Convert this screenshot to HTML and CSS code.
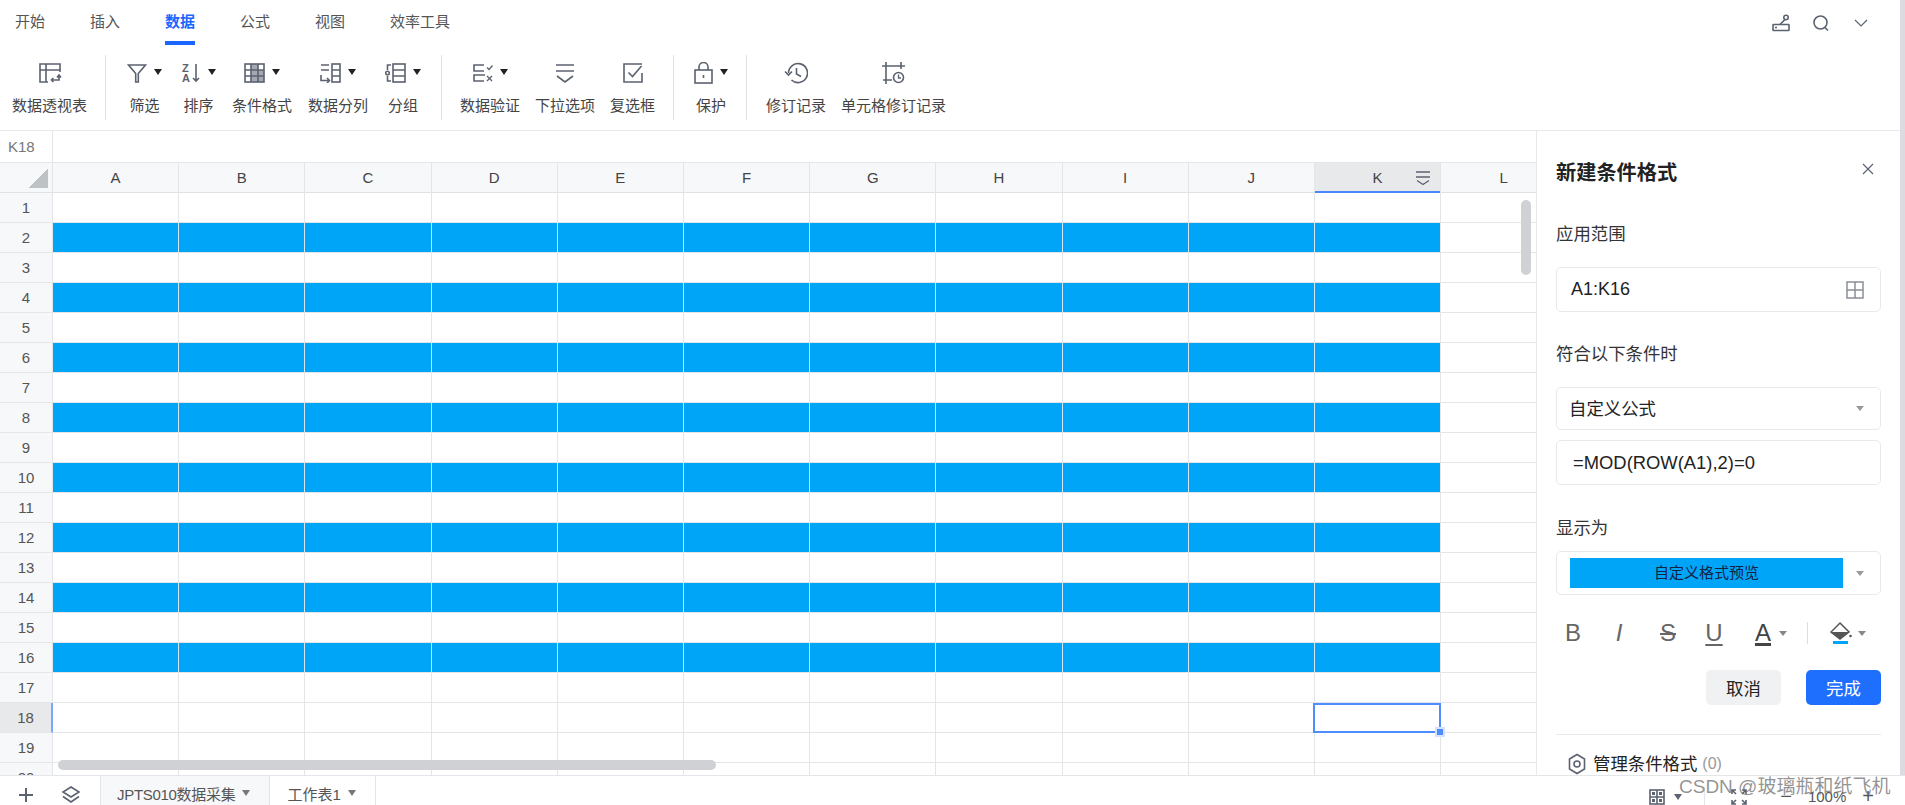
FILE: index.html
```html
<!DOCTYPE html>
<html lang="zh-CN">

<head>
    <meta charset="UTF-8">
    <meta name="viewport" content="width=device-width, initial-scale=1.0">
    <title>新建条件格式</title>
    <link rel="stylesheet" href="styles.css">
</head>

<body>
    <div class="top-wrap">
        <div class="top">
            <div class="tabs">
                <span class="tab">开始</span>
                <span class="tab">插入</span>
                <span class="tab active">数据</span>
                <span class="tab">公式</span>
                <span class="tab">视图</span>
                <span class="tab">效率工具</span>
                <div class="tabs-right">
                    <svg class="ico" width="20" height="20" viewBox="0 0 20 20"><rect x="2" y="11.5" width="16" height="6" rx="0.5"/><path d="M4 14.5h2M9 11.5l5-5"/><circle cx="15" cy="4.5" r="2.2"/></svg>
                    <svg class="ico" width="20" height="20" viewBox="0 0 20 20"><circle cx="9.5" cy="9.5" r="6.5"/><path d="M14 14.5l3 3"/></svg>
                    <svg class="ico thin" width="20" height="20" viewBox="0 0 20 20"><path d="M4 7l6 6 6-6"/></svg>
                </div>
            </div>

            <div class="ribbon">
                <div class="group g1">
                    <div class="item">
                        <div class="item-icon"><svg class="ico" width="24" height="22" viewBox="0 0 24 22"><path d="M10 20H2V2h20v8M2 8h20M8 2v18"/><path d="M13 18h8v-5M19 15.500l2-2.500 2 2.500M13 18l2.500-2M13 18l2.500 2"/></svg></div>
                        <span>数据透视表</span>
                    </div>
                </div>
                <div class="group g2">
                    <div class="item wide-gap">
                        <div class="item-icon"><svg class="ico" width="20" height="20" viewBox="0 0 20 20"><path d="M1.500 2h17L11.300 10.500V19H8.700v-8.500z"/></svg><i class="caret"></i></div>
                        <span>筛选</span>
                    </div>
                    <div class="item">
                        <div class="item-icon"><svg class="ico" width="20" height="20" viewBox="0 0 20 20"><text class="ico-text" x="1" y="9">Z</text><text class="ico-text" x="1" y="19">A</text><path d="M15 1v17M12 15l3 3 3-3"/></svg><i class="caret"></i></div>
                        <span>排序</span>
                    </div>
                    <div class="item">
                        <div class="item-icon"><svg class="ico" width="21" height="20" viewBox="0 0 21 20"><rect class="shade" x="7" y="7" width="13" height="12"/><rect class="shade" x="7" y="1" width="7" height="6"/><rect x="1" y="1" width="19" height="18"/><path d="M1 7h19M1 13h19M7 1v18M14 1v18"/></svg><i class="caret"></i></div>
                        <span>条件格式</span>
                    </div>
                    <div class="item">
                        <div class="item-icon"><svg class="ico" width="21" height="20" viewBox="0 0 21 20"><path d="M1 2h8M1 7h8M1 12v5.500h8M7 15l2.500 2.500L7 20"/><rect x="12" y="1" width="8" height="18"/><path d="M12 7h8M12 13h8"/></svg><i class="caret"></i></div>
                        <span>数据分列</span>
                    </div>
                    <div class="item">
                        <div class="item-icon"><svg class="ico" width="21" height="20" viewBox="0 0 21 20"><rect x="8" y="1" width="12" height="18"/><path d="M8 7h12M8 13h12M6 2H2.500v5M2.500 13v5H6"/><circle cx="2.500" cy="10" r="1.800"/></svg><i class="caret"></i></div>
                        <span>分组</span>
                    </div>
                </div>
                <div class="group g3">
                    <div class="item">
                        <div class="item-icon"><svg class="ico" width="20" height="20" viewBox="0 0 20 20"><path d="M11 2H1v6h10M12 12H1v6h10"/><path class="fine" d="M14 4.500l2 2 3.500-4M14 13l5 5M19 13l-5 5"/></svg><i class="caret"></i></div>
                        <span>数据验证</span>
                    </div>
                    <div class="item">
                        <div class="item-icon"><svg class="ico" width="20" height="20" viewBox="0 0 20 20"><path d="M1 2h18M1 8h18M2 13l8 6 8-6"/></svg></div>
                        <span>下拉选项</span>
                    </div>
                    <div class="item">
                        <div class="item-icon"><svg class="ico" width="20" height="20" viewBox="0 0 20 20"><path d="M19 10v9H1V1h18"/><path d="M5.500 9.500l4 4 9-10.500"/></svg></div>
                        <span>复选框</span>
                    </div>
                </div>
                <div class="group g4">
                    <div class="item">
                        <div class="item-icon"><svg class="ico" width="19" height="22" viewBox="0 0 19 22"><rect x="1" y="8" width="17" height="13"/><path d="M5 8V5a4.500 4.500 0 0 1 9 0v3M9.500 13v3"/></svg><i class="caret"></i></div>
                        <span>保护</span>
                    </div>
                </div>
                <div class="group g5">
                    <div class="item">
                        <div class="item-icon"><svg class="ico" width="24" height="22" viewBox="0 0 24 22"><path d="M4.500 11a9.500 9.500 0 1 1 3 7"/><path d="M12.500 6v6l4.500 2.500M1 9.500l3.500 3.500 3.500-3.500"/></svg></div>
                        <span>修订记录</span>
                    </div>
                    <div class="item">
                        <div class="item-icon"><svg class="ico" width="23" height="22" viewBox="0 0 23 22"><path d="M4 0v22M19 0v7M0 4h23M1 18h9"/><circle cx="16.500" cy="15.500" r="5"/><path class="fine" d="M16.500 12.500v3.500h2.500"/></svg></div>
                        <span>单元格修订记录</span>
                    </div>
                </div>
            </div>

            <div class="work">
                <div class="sheet">
                    <div class="formula-bar">
                        <div class="name-box">K18</div>
                    </div>
                    <div class="col-head">
                        <div class="corner"><i class="corner-mark"></i></div>
                        <div class="col">A</div>
                        <div class="col">B</div>
                        <div class="col">C</div>
                        <div class="col">D</div>
                        <div class="col">E</div>
                        <div class="col">F</div>
                        <div class="col">G</div>
                        <div class="col">H</div>
                        <div class="col">I</div>
                        <div class="col">J</div>
                        <div class="col col-on">K
                            <svg class="ico col-menu" width="16" height="16" viewBox="0 0 16 16"><path d="M1 2h14M1 7h14M2 10.500l6 4 6-4"/></svg>
                        </div>
                        <div class="col">L</div>
                    </div>
                    <div class="rows">
                        <div class="row"><div class="num">1</div><div class="cells"></div></div>
                        <div class="row"><div class="num">2</div><div class="cells"><div class="fill"></div></div></div>
                        <div class="row"><div class="num">3</div><div class="cells"></div></div>
                        <div class="row"><div class="num">4</div><div class="cells"><div class="fill"></div></div></div>
                        <div class="row"><div class="num">5</div><div class="cells"></div></div>
                        <div class="row"><div class="num">6</div><div class="cells"><div class="fill"></div></div></div>
                        <div class="row"><div class="num">7</div><div class="cells"></div></div>
                        <div class="row"><div class="num">8</div><div class="cells"><div class="fill"></div></div></div>
                        <div class="row"><div class="num">9</div><div class="cells"></div></div>
                        <div class="row"><div class="num">10</div><div class="cells"><div class="fill"></div></div></div>
                        <div class="row"><div class="num">11</div><div class="cells"></div></div>
                        <div class="row"><div class="num">12</div><div class="cells"><div class="fill"></div></div></div>
                        <div class="row"><div class="num">13</div><div class="cells"></div></div>
                        <div class="row"><div class="num">14</div><div class="cells"><div class="fill"></div></div></div>
                        <div class="row"><div class="num">15</div><div class="cells"></div></div>
                        <div class="row"><div class="num">16</div><div class="cells"><div class="fill"></div></div></div>
                        <div class="row"><div class="num">17</div><div class="cells"></div></div>
                        <div class="row"><div class="num num-on">18</div><div class="cells"><div class="selected"><i class="handle"></i></div></div></div>
                        <div class="row"><div class="num">19</div><div class="cells"></div></div>
                        <div class="row"><div class="num">20</div><div class="cells"></div></div>
                    </div>
                    <div class="scroll-v"></div>
                    <div class="scroll-h"></div>
                </div>

                <div class="panel">
                    <div class="panel-title">
                        <span>新建条件格式</span>
                        <svg class="ico thin" width="12" height="12" viewBox="0 0 12 12"><path d="M1 1l10 10M11 1L1 11"/></svg>
                    </div>
                    <div class="label label-range">应用范围</div>
                    <div class="field field-range">
                        <span>A1:K16</span>
                        <svg class="ico grey" width="18" height="18" viewBox="0 0 18 18"><rect x="1" y="1" width="16" height="16"/><path d="M9 1v16M1 9h16"/></svg>
                    </div>
                    <div class="label label-cond">符合以下条件时</div>
                    <div class="field field-select">
                        <span>自定义公式</span>
                        <i class="caret grey-caret"></i>
                    </div>
                    <div class="field field-formula">=MOD(ROW(A1),2)=0</div>
                    <div class="label label-show">显示为</div>
                    <div class="field field-preview">
                        <div class="preview">自定义格式预览</div>
                        <i class="caret grey-caret"></i>
                    </div>
                    <div class="format-row">
                        <span class="fmt fmt-b">B</span>
                        <span class="fmt fmt-i">I</span>
                        <span class="fmt fmt-s">S</span>
                        <span class="fmt fmt-u">U</span>
                        <span class="fmt fmt-a">A</span>
                        <i class="caret small-caret fmt-a-caret"></i>
                        <i class="fmt-sep"></i>
                        <span class="bucket">
                            <svg width="22" height="24" viewBox="0 0 22 24"><path d="M10 2l9 9-9 7-9-7z" fill="#fff" stroke="#555" stroke-width="1.500"/><path d="M1 11h18l-9 7z" fill="#555"/><circle cx="20.500" cy="15" r="1.300" fill="#555"/><rect x="3" y="20" width="15" height="3" fill="#00a5f8"/></svg>
                            <i class="caret small-caret"></i>
                        </span>
                    </div>
                    <div class="actions">
                        <button class="btn">取消</button>
                        <button class="btn primary">完成</button>
                    </div>
                    <div class="panel-line"></div>
                    <div class="manage">
                        <svg class="ico" width="18" height="22" viewBox="0 0 18 22"><path d="M9 1.500l7.500 4.500v10L9 20.500 1.500 16V6z"/><circle cx="9" cy="11" r="3"/></svg>
                        <span>管理条件格式</span>
                        <span class="count">(0)</span>
                    </div>
                </div>
            </div>
        </div>
    </div>

    <div class="bottom">
        <svg class="ico add" width="18" height="18" viewBox="0 0 18 18"><path d="M9 2v14M2 9h14"/></svg>
        <svg class="ico layers" width="20" height="20" viewBox="0 0 20 20"><path d="M10 2l8 5-8 5-8-5zM2 11.500l8 5.500 8-5.500"/></svg>
        <div class="sheet-tab on">JPTS010数据采集<i class="caret tab-caret"></i></div>
        <div class="sheet-tab">工作表1<i class="caret tab-caret"></i></div>
        <div class="status">
            <svg class="ico status-grid" width="16" height="16" viewBox="0 0 16 16"><rect x="1" y="1" width="14" height="14"/><path d="M8 1v14M1 8h14"/><rect class="solid" x="3" y="3" width="3" height="3"/><rect class="solid" x="10" y="3" width="3" height="3"/><rect class="solid" x="3" y="10" width="3" height="3"/><rect class="solid" x="10" y="10" width="3" height="3"/></svg>
            <i class="caret status-caret"></i>
            <i class="status-sep"></i>
            <svg class="ico status-full" width="16" height="16" viewBox="0 0 16 16"><path d="M1 5V1h4M11 1h4v4M15 11v4h-4M5 15H1v-4M1 1l4 4M15 1l-4 4M15 15l-4-4M1 15l4-4"/></svg>
            <span class="zoom-minus">−</span>
            <span class="zoom-val">100%</span>
            <span class="zoom-plus">+</span>
        </div>
    </div>

    <div class="watermark">CSDN @玻璃瓶和纸飞机</div>
</body>

</html>
```

FILE: styles.css
```css
* {
  box-sizing: border-box;
}
html, body {
  margin: 0;
  height: 100%;
  overflow: hidden;
}
body {
  width: 1905px;
  height: 805px;
  position: relative;
  background-color: #fff;
  color: #333;
  font-family: "Liberation Sans", "Noto Sans CJK SC", sans-serif;
  font-size: 15px;
}
i {
  display: block;
}
.top-wrap {
  height: 775px;
  padding-right: 5px;
  background-color: #dcdce0;
}
.top {
  height: 775px;
  background-color: #fff;
  display: flex;
  flex-direction: column;
}
.ico {
  fill: none;
  stroke: #5b6270;
  stroke-width: 1.6;
  flex: none;
}
.ico.thin {
  stroke-width: 1.2;
}
.ico.grey {
  stroke: #8a8f98;
  stroke-width: 1.5;
}
.ico .fine {
  stroke-width: 1.3;
}
.ico .shade {
  fill: #a4a8b0;
  stroke: none;
}
.ico .solid {
  fill: #5b6270;
  stroke: none;
}
.ico-text {
  fill: #5b6270;
  stroke: none;
  font-size: 11px;
  font-weight: bold;
}
.caret {
  width: 0;
  height: 0;
  border-left: 4.5px solid transparent;
  border-right: 4.5px solid transparent;
  border-top: 6px solid #222;
  flex: none;
}

/* tabs */
.tabs {
  height: 45px;
  display: flex;
  gap: 45px;
  padding-left: 15px;
  flex: none;
}
.tab {
  height: 45px;
  line-height: 44px;
  color: #555;
}
.tab.active {
  color: #1a66ff;
  font-weight: bold;
  border-bottom: 4px solid #1a66ff;
}
.tabs-right {
  margin-left: auto;
  display: flex;
  align-items: center;
  gap: 20px;
  padding-right: 29px;
}

/* ribbon */
.ribbon {
  height: 86px;
  flex: none;
  display: flex;
  padding-top: 10px;
  border-bottom: 1px solid #e8e9eb;
}
.group {
  height: 65px;
  display: flex;
  gap: 16px;
  padding: 0 18px 0 20px;
  border-right: 1px solid #dfe0e3;
}
.group:last-child {
  border-right: none;
}
.g1 {
  padding-left: 12px;
}
.g2 {
  padding-left: 21px;
  padding-right: 20px;
}
.g2 .item:last-child {
  margin-left: 1px;
}
.g3 {
  padding-left: 18px;
  gap: 15px;
}
.g5 {
  padding-left: 19px;
  gap: 15px;
}
.item {
  display: flex;
  flex-direction: column;
  align-items: center;
  color: #444;
}
.item.wide-gap {
  margin-right: 3px;
}
.item-icon {
  height: 32px;
  margin-top: 2px;
  margin-bottom: 6px;
  display: flex;
  align-items: center;
  gap: 7px;
}
.item-icon .caret {
  margin-top: -2px;
}
.item span {
  line-height: 22px;
  white-space: nowrap;
}

/* sheet */
.work {
  flex: 1;
  display: flex;
  min-height: 0;
}
.sheet {
  width: 1537px;
  flex: none;
  position: relative;
  overflow: hidden;
  border-right: 1px solid #e8e9eb;
}
.formula-bar {
  height: 32px;
  border-bottom: 1px solid #e3e5e9;
}
.name-box {
  width: 53px;
  height: 31px;
  padding-left: 8px;
  line-height: 31px;
  color: #777;
  border-right: 1px solid #e3e5e9;
}
.col-head {
  height: 30px;
  display: grid;
  grid-template-columns: 53px repeat(12, 126.2px);
  background-color: #f7f8fa;
  border-bottom: 1px solid #e0e2e6;
}
.corner {
  position: relative;
  border-right: 1px solid #e3e5e9;
}
.corner-mark {
  width: 20px;
  height: 20px;
  margin: 5px 0 0 28px;
  background: linear-gradient(to bottom right, transparent 50%, #bfc2c5 50%);
}
.col {
  position: relative;
  text-align: center;
  line-height: 29px;
  color: #444;
  border-right: 1px solid #e3e5e9;
}
.col-on {
  background-color: #e8e9eb;
  box-shadow: inset 0 -2px 0 #4a86ff;
  height: 30px;
}
.col-menu {
  position: absolute;
  right: 9px;
  top: 7px;
  stroke-width: 1.3;
}
.row {
  height: 30px;
  display: flex;
}
.num {
  width: 53px;
  flex: none;
  text-align: center;
  line-height: 29px;
  color: #555;
  background-color: #f7f8fa;
  border-right: 1px solid #e3e5e9;
  border-bottom: 1px solid #e3e5e9;
}
.num-on {
  background-color: #e8e9eb;
  border-right: 2px solid #7aa7ff;
}
.cells {
  flex: 1;
  position: relative;
  border-bottom: 1px solid #e3e5e9;
  background-image: repeating-linear-gradient(to right, #fff 0, #fff 125.2px, #e3e5e9 125.2px, #e3e5e9 126.2px);
}
.fill {
  width: 1387px;
  height: 29px;
  background-image: repeating-linear-gradient(to right, #00a5f8 0, #00a5f8 125.2px, #d5e7f3 125.2px, #d5e7f3 126.2px);
}
.selected {
  position: absolute;
  z-index: 2;
  left: 1260px;
  top: 0;
  width: 128px;
  height: 30px;
  border: 2px solid #4d8dff;
}
.handle {
  position: absolute;
  right: -6px;
  bottom: -6px;
  width: 10px;
  height: 10px;
  background-color: #4d8dff;
  border: 2px solid #d5e3ff;
}
.scroll-v {
  position: absolute;
  z-index: 3;
  left: 1521px;
  top: 69px;
  width: 10px;
  height: 75px;
  border-radius: 5px;
  background-color: #d0d1d5;
}
.scroll-h {
  position: absolute;
  z-index: 3;
  left: 58px;
  bottom: 5px;
  width: 658px;
  height: 10px;
  border-radius: 5px;
  background-color: #d0d1d5;
}

/* panel */
.panel {
  flex: 1;
  min-width: 0;
  padding: 28px 19px 0;
  overflow: hidden;
  color: #222;
  font-size: 17.4px;
}
.panel-title {
  height: 28px;
  line-height: 28px;
  font-size: 20.2px;
  font-weight: bold;
  display: flex;
  justify-content: space-between;
  align-items: center;
  padding-right: 7px;
}
.panel-title svg {
  margin-top: -8px;
}
.label {
  height: 24px;
  line-height: 24px;
  color: #333;
}
.label-range {
  margin-top: 35px;
}
.label-cond {
  margin-top: 30px;
}
.label-show {
  margin-top: 31px;
}
.field {
  display: flex;
  justify-content: space-between;
  align-items: center;
  border: 1px solid #e8e9ec;
  border-radius: 5px;
  padding: 0 16px 0 14px;
}
.field-range {
  height: 45px;
  margin-top: 21px;
  font-size: 18px;
}
.field-select {
  height: 43px;
  margin-top: 21px;
  padding-left: 12px;
  padding-bottom: 3px;
}
.field-select .caret {
  margin-top: 3px;
}
.field-formula {
  height: 45px;
  margin-top: 10px;
  padding-left: 16px;
  font-size: 18.4px;
}
.field-preview {
  height: 44px;
  margin-top: 11px;
  padding-left: 13px;
}
.grey-caret {
  border-left-width: 4px;
  border-right-width: 4px;
  border-top: 5px solid #999;
}
.preview {
  width: 273px;
  height: 30px;
  line-height: 30px;
  text-align: center;
  font-size: 15px;
  background-color: #00a5f8;
  color: #124;
}
.format-row {
  height: 24px;
  margin: 26px 0 0 -6px;
  display: flex;
  align-items: center;
  color: #666;
  font-size: 24px;
}
.fmt {
  width: 46px;
  text-align: center;
}
.fmt-i {
  font-style: italic;
  margin-right: 3px;
}
.fmt-s {
  text-decoration: line-through 1.5px;
}
.fmt-u {
  text-decoration: underline 1.5px;
  text-underline-offset: 3px;
  margin-right: 3px;
}
.fmt-a {
  color: #444;
  text-decoration: underline 3px;
  text-underline-offset: 2px;
}
.fmt-a-caret {
  margin-left: -7px;
}
.fmt-sep {
  width: 1px;
  height: 22px;
  background-color: #dcdde0;
  margin-left: 20px;
  margin-right: 22px;
}
.bucket {
  display: flex;
  align-items: center;
  gap: 6px;
}
.small-caret {
  border-left-width: 4px;
  border-right-width: 4px;
  border-top: 5px solid #888;
}
.actions {
  margin-top: 25px;
  display: flex;
  justify-content: flex-end;
  gap: 25px;
}
.btn {
  width: 75px;
  height: 35px;
  border: none;
  border-radius: 5px;
  background-color: #f0f1f3;
  color: #222;
  font: inherit;
}
.btn.primary {
  background-color: #1f6fff;
  color: #fff;
}
.panel-line {
  height: 1px;
  margin-top: 29px;
  background-color: #e8e9eb;
}
.manage {
  margin-top: 17px;
  height: 24px;
  line-height: 24px;
  display: flex;
  align-items: center;
  padding-left: 12px;
  gap: 7px;
}
.count {
  color: #999;
  font-size: 16px;
  margin-left: -2px;
}

/* bottom bar */
.bottom {
  height: 40px;
  display: flex;
  align-items: flex-start;
  border-top: 1px solid #e3e5e9;
}
.add {
  margin: 10px 0 0 17px;
  stroke-width: 2;
}
.layers {
  margin: 9px 0 0 26px;
}
.sheet-tab {
  height: 39px;
  padding-top: 8px;
  line-height: 22px;
  display: flex;
  align-items: flex-start;
  gap: 7px;
  color: #555;
  border-right: 1px solid #e3e5e9;
  padding-left: 17px;
  padding-right: 19px;
}
.tab-caret {
  margin-top: 6px;
  border-top-color: #777;
}
.sheet-tab.on {
  margin-left: 19px;
  padding-left: 16px;
  letter-spacing: -0.3px;
  background-color: #f7f8fa;
  border-left: 1px solid #e3e5e9;
}
.status {
  margin-left: auto;
  height: 30px;
  display: flex;
  align-items: center;
  padding: 11px 31px 0 0;
  color: #555;
}
.status-caret {
  margin: 0 22px 0 9px;
  border-top-color: #5b6270;
}
.status-sep {
  width: 1px;
  height: 20px;
  background-color: #e3e5e9;
  margin-right: 26px;
}
.zoom-minus {
  margin-left: 33px;
  font-size: 20px;
}
.zoom-val {
  margin-left: 16px;
  font-size: 15px;
}
.zoom-plus {
  margin-left: 16px;
  font-size: 20px;
}
.watermark {
  position: absolute;
  left: 1679px;
  top: 774px;
  font-size: 19px;
  line-height: 26px;
  color: rgba(100, 100, 100, 0.7);
  white-space: nowrap;
}
```
